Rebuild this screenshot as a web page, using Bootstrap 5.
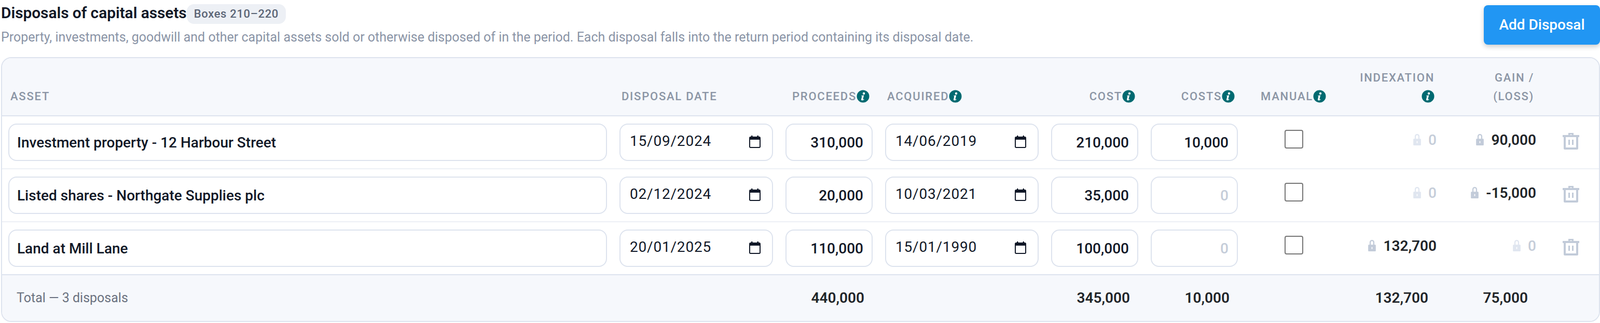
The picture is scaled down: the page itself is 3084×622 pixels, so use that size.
<!DOCTYPE html>
<html lang="en-GB">
<head>
  <meta charset="UTF-8">
  <meta name="viewport" content="width=device-width, initial-scale=1.0">
  <title>Disposals of capital assets</title>
  <link href="https://cdn.jsdelivr.net/npm/bootstrap@5.3.0/dist/css/bootstrap.min.css" rel="stylesheet">
  <style>
    body { background: #fff; font-family: Roboto, "Liberation Sans", sans-serif; color: #111827; padding-left: 2px; }
    .top-bar { height: 110px; }
    .page-title { font-size: 30px; font-weight: 600; letter-spacing: -.1px; line-height: 38px; margin: 3px 0 0; }
    .boxes-pill { font-size: 22px; font-weight: 500; letter-spacing: .66px; line-height: 38px; height: 38px; padding: 0 14px; background: #edf0f5; color: #5b6576; border-radius: 14px; }
    .sub-line { font-size: 25px; line-height: 36px; margin: 8px 0 0; color: #8a94a6; }
    .add-btn { width: 224px; height: 76px; margin-top: 10px; background: #2196f3; color: #fff; border: 0; border-radius: 8px; font-size: 28px; font-weight: 500; box-shadow: 0 4px 10px rgba(0,0,0,.2); }
    .add-btn:hover { background: #2196f3; color: #fff; }
    .sheet { border: 2px solid #dde3ee; border-radius: 20px; overflow: hidden; }
    .sheet table { table-layout: fixed; width: 100%; margin: 0; border-collapse: separate; border-spacing: 0; }
    .sheet thead th { height: 112px; padding: 0 18px 18px 16px; vertical-align: bottom; background: #f6f8fc; border-bottom: 2px solid #dde3ee; color: #8b95a5; font-size: 22px; font-weight: 500; letter-spacing: 1.76px; line-height: 36px; text-transform: uppercase; box-shadow: none; }
    .sheet thead th.calc-head { padding-right: 16px; }
    .sheet tbody td { padding: 14px 12px; vertical-align: middle; border-bottom: 2px solid #edf0f5; box-shadow: none; height: 102px; }
    .sheet tbody tr:last-child td { border-bottom-color: #dde3ee; }
    .sheet tfoot td { height: 88px; padding: 0 28px 0 12px; background: #f6f8fc; border: 0; font-size: 28px; font-weight: 600; box-shadow: none; }
    .sheet tfoot td.total-label { padding-left: 28px; font-size: 25px; font-weight: 400; color: #6b7280; }
    .cell-input { height: 72px; border: 2px solid #dde3ee; border-radius: 16px; font-size: 28px; color: #111827; box-shadow: none; }
    .asset-input { padding: 0 15px; font-weight: 500; }
    .date-input { padding: 0 18px 6px; letter-spacing: .8px; }
    .money-input { padding: 0 16px; font-weight: 500; text-align: right; }
    .money-input.is-zero { color: #c5cdd9; }
    .date-wrap { position: relative; }
    .cal-ico { position: absolute; top: 23px; right: 24px; width: 22px; height: 24px; pointer-events: none; }
    .cell-check { width: 36px; height: 36px; margin: 0; border: 2px solid #767676; border-radius: 5px; float: none; position: relative; top: -6px; }
    .calc-val { font-size: 28px; font-weight: 600; position: relative; top: -4px; }
    .calc-val.is-zero { color: #c5cdd9; font-weight: 500; }
    .lock-ico { width: 15px; height: 22px; margin-right: 14px; vertical-align: -1px; fill: #c2cbd9; }
    .is-zero .lock-ico { fill: #e0e6f0; }
    .info-ico { width: 25px; height: 25px; vertical-align: -5px; }
    .bin-btn { background: none; border: 0; padding: 0; line-height: 0; position: relative; top: -2px; }
  </style>
</head>
<body>
  <svg width="0" height="0" class="d-block position-absolute">
    <symbol id="infoIco" viewBox="0 0 26 26">
      <circle cx="13" cy="13" r="12.5" fill="#006a71"/>
      <circle cx="14.6" cy="7.2" r="2.3" fill="#fff"/>
      <path d="M9.600 11.600l5.200-.9-1.900 8c-.1.5.3.7.7.5l1.300-.7.3.9c-1.400 1.200-2.600 1.800-3.900 1.800-1.500 0-2.200-.9-1.900-2.300l1.300-5.600c.1-.5-.2-.7-1.200-.8z" fill="#fff"/>
    </symbol>
    <symbol id="lockIco" viewBox="0 0 16 24">
      <path fill-rule="evenodd" d="M3 10V5a5 5 0 0 1 10 0v5h1.500c.8 0 1.500.7 1.500 1.500v11c0 .8-.7 1.500-1.500 1.500h-13C.7 24 0 23.300 0 22.500v-11C0 10.700.7 10 1.500 10H3zm2.500 0h5V5a2.500 2.500 0 0 0-5 0v5zM7 15v4h2v-4H7z"/>
    </symbol>
    <symbol id="binIco" viewBox="0 0 32 32">
      <path fill="#c2cbd9" fill-rule="evenodd" d="M11 0h10v4h11v4h-2v22c0 1.100-.9 2-2 2H4c-1.100 0-2-.9-2-2V8H0V4h11V0zm3 3v1h4V3h-4zM6 8v20h20V8H6zm5 5h3v10h-3V13zm7 0h3v10h-3V13z"/>
    </symbol>
    <symbol id="calIco" viewBox="0 0 22 24">
      <path fill="#111827" fill-rule="evenodd" d="M4 0h2.500v2h9V0H18v2h1.500C20.900 2 22 3.100 22 4.500v17c0 1.400-1.100 2.500-2.500 2.500h-17C1.100 24 0 22.900 0 21.500v-17C0 3.100 1.100 2 2.500 2H4V0zM2 8v13.500c0 .3.200.5.5.5h17c.3 0 .5-.2.500-.5V8H2z"/>
    </symbol>
  </svg>

  <div class="top-bar d-flex justify-content-between align-items-start">
    <div>
      <div class="d-flex align-items-center">
        <h1 class="page-title">Disposals of capital assets</h1>
        <span class="boxes-pill mt-2">Boxes 210–220</span>
      </div>
      <p class="sub-line">Property, investments, goodwill and other capital assets sold or otherwise disposed of in the period. Each disposal falls into the return period containing its disposal date.</p>
    </div>
    <button type="button" class="btn add-btn">Add Disposal</button>
  </div>

  <div class="sheet">
    <table class="table">
      <colgroup>
        <col style="width:1178px"><col style="width:320px"><col style="width:192px"><col style="width:320px"><col style="width:192px"><col style="width:192px"><col style="width:192px"><col style="width:191px"><col style="width:192px"><col>
      </colgroup>
      <thead>
        <tr>
          <th>Asset</th>
          <th>Disposal date</th>
          <th class="text-end">Proceeds<svg class="info-ico"><use href="#infoIco"/></svg></th>
          <th>Acquired<svg class="info-ico"><use href="#infoIco"/></svg></th>
          <th class="text-end">Cost<svg class="info-ico"><use href="#infoIco"/></svg></th>
          <th class="text-end">Costs<svg class="info-ico"><use href="#infoIco"/></svg></th>
          <th class="text-center">Manual<svg class="info-ico"><use href="#infoIco"/></svg></th>
          <th class="text-end calc-head">Indexation <svg class="info-ico"><use href="#infoIco"/></svg></th>
          <th class="text-end calc-head">Gain / (Loss)</th>
          <th></th>
        </tr>
      </thead>
      <tbody id="rows"></tbody>
      <tfoot>
        <tr>
          <td class="total-label" colspan="2">Total — 3 disposals</td>
          <td class="text-end">440,000</td>
          <td></td>
          <td class="text-end">345,000</td>
          <td class="text-end">10,000</td>
          <td></td>
          <td class="text-end">132,700</td>
          <td class="text-end">75,000</td>
          <td></td>
        </tr>
      </tfoot>
    </table>
  </div>

  <script>
    const disposals = [
      { asset: 'Investment property - 12 Harbour Street', sold: '15/09/2024', proceeds: '310,000', bought: '14/06/2019', cost: '210,000', costs: '10,000', index: '0', gain: '90,000' },
      { asset: 'Listed shares - Northgate Supplies plc', sold: '02/12/2024', proceeds: '20,000', bought: '10/03/2021', cost: '35,000', costs: '0', index: '0', gain: '-15,000' },
      { asset: 'Land at Mill Lane', sold: '20/01/2025', proceeds: '110,000', bought: '15/01/1990', cost: '100,000', costs: '0', index: '132,700', gain: '0' }
    ];

    const money = v => `<input class="form-control cell-input money-input ${v === '0' ? 'is-zero' : ''}" value="${v}">`;
    const day = v => `<div class="date-wrap"><input class="form-control cell-input date-input" value="${v}"><svg class="cal-ico"><use href="#calIco"/></svg></div>`;
    const calc = v => `<span class="calc-val ${v === '0' ? 'is-zero' : ''}"><svg class="lock-ico"><use href="#lockIco"/></svg>${v}</span>`;

    document.getElementById('rows').innerHTML = disposals.map(d => `
      <tr>
        <td><input class="form-control cell-input asset-input" value="${d.asset}"></td>
        <td>${day(d.sold)}</td>
        <td>${money(d.proceeds)}</td>
        <td>${day(d.bought)}</td>
        <td>${money(d.cost)}</td>
        <td>${money(d.costs)}</td>
        <td class="text-center"><input class="form-check-input cell-check" type="checkbox"></td>
        <td class="text-end">${calc(d.index)}</td>
        <td class="text-end">${calc(d.gain)}</td>
        <td class="text-center"><button type="button" class="bin-btn"><svg width="32" height="32"><use href="#binIco"/></svg></button></td>
      </tr>`).join('');
  </script>
  <script src="https://cdn.jsdelivr.net/npm/bootstrap@5.3.0/dist/js/bootstrap.bundle.min.js"></script>
</body>
</html>
